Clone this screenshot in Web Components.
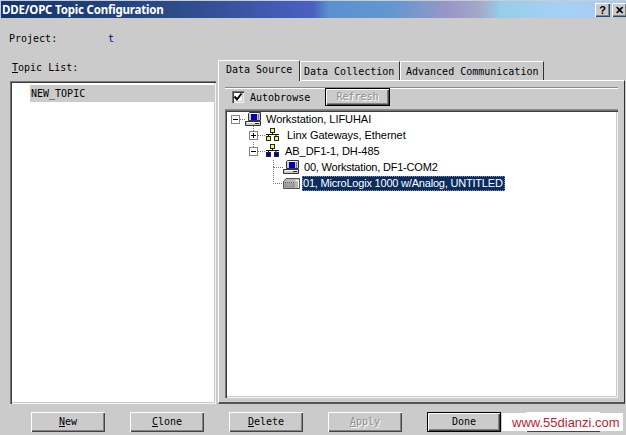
<!DOCTYPE html>
<html>
<head>
<meta charset="utf-8">
<title>DDE/OPC Topic Configuration</title>
<style>
    html, body { margin: 0; padding: 0; background: #cbcbcb; }
</style>
</head>
<body>
<dde-dialog>
    <win-titlebar slot="title">DDE/OPC Topic Configuration</win-titlebar>
    <project-row slot="project"></project-row>
    <topic-list slot="left"></topic-list>
    <tab-panel slot="right">
        <browse-bar></browse-bar>
        <source-tree></source-tree>
    </tab-panel>
    <win-button slot="buttons" key="N" rest="ew"></win-button>
    <win-button slot="buttons" key="C" rest="lone"></win-button>
    <win-button slot="buttons" key="D" rest="elete"></win-button>
    <win-button slot="buttons" key="A" rest="pply" disabled></win-button>
    <win-button slot="buttons" rest="Done" default></win-button>
    <win-button slot="buttons"></win-button>
    <site-mark slot="mark">www.55dianzi.com</site-mark>
</dde-dialog>

<script>
const MONO = `"DejaVu Sans Mono", "Liberation Mono", monospace`;
const SANS = `"Noto Sans", "DejaVu Sans", sans-serif`;

// classic raised / sunken edges
const RAISED = 'box-shadow: inset 1px 1px 0 #fff, inset -1px -1px 0 #444, inset -2px -2px 0 #848484;';
const SUNKEN = 'box-shadow: inset 1px 1px 0 #777, inset 2px 2px 0 #3c3c3c, inset -1px -1px 0 #f4f4f4, inset -2px -2px 0 #cbcbcb;';

class ShadowBase extends HTMLElement {
    constructor() {
        super();
        this.attachShadow({mode: "open"});
        this.shadowRoot.innerHTML = this.markup();
    }
    markup() { return ''; }
}

class DdeDialog extends ShadowBase {
    markup() { return `
    <style>
        :host {
            display: flex; flex-direction: column; position: relative;
            width: 626px; height: 435px; overflow: hidden;
            background: #cbcbcb; font: 10px ${MONO}; color: #000;
        }
        .main { display: flex; height: 345px; gap: 2px; padding-left: 10px; }
        .main ::slotted(topic-list) { flex: none; }
        .main ::slotted(tab-panel) { flex: none; }
        .buttons { display: flex; gap: 25px; padding: 8px 0 0 31px; }
    </style>
    <slot name="title"></slot>
    <slot name="project"></slot>
    <div class="main"><slot name="left"></slot><slot name="right"></slot></div>
    <div class="buttons"><slot name="buttons"></slot></div>
    <slot name="mark"></slot>`; }
}

class WinTitlebar extends ShadowBase {
    markup() { return `
    <style>
        :host {
            display: flex; align-items: center; justify-content: space-between;
            height: 17px; margin: 1px 0 0 1px; padding-left: 1px;
            background: linear-gradient(90deg, #12346c 0, #2c4a86 170px, #4a60c2 312px, #5a90d0 328px,
                #6298d0 392px, #9a96c8 448px, #a2a8c8 478px, #98cde8 500px, #a6d0f6 560px, #a6ccf2 625px);
            color: #fff; font: bold 11.5px ${SANS}; letter-spacing: -0.2px; white-space: nowrap;
        }
        .caps { display: flex; gap: 2px; margin-right: -1px; }
        .cap {
            width: 15px; height: 14px; background: #cbcbcb; color: #000; ${RAISED}
            font: bold 11px/14px "Liberation Sans", sans-serif; text-align: center; letter-spacing: 0;
        }
    </style>
    <span><slot></slot></span>
    <div class="caps"><div class="cap">?</div><div class="cap">✕</div></div>`; }
}

class ProjectRow extends ShadowBase {
    markup() { return `
    <style>
        :host { display: flex; height: 41px; padding: 15px 0 0 9px; box-sizing: border-box; }
        span { width: 99px; }
        b { font-weight: normal; color: #00008c; }
    </style>
    <span>Project:</span><b>t</b>`; }
}

class TopicList extends ShadowBase {
    markup() { return `
    <style>
        :host { display: flex; flex-direction: column; width: 206px; }
        label { height: 22px; padding: 3px 0 0 2px; box-sizing: border-box; }
        u { text-decoration: underline; }
        .box {
            flex: 1; background: #fff; ${SUNKEN}
            padding: 4px 2px 0 20px; box-sizing: border-box;
        }
        .row { background: #cbcbcb; height: 17px; line-height: 17px; padding-left: 1px; }
    </style>
    <label><u>T</u>opic List:</label>
    <div class="box"><div class="row">NEW_TOPIC</div></div>`; }
}

class TabPanel extends ShadowBase {
    markup() { return `
    <style>
        :host { display: flex; flex-direction: column; width: 407px; }
        .tabs { display: flex; height: 21px; align-items: flex-end; position: relative; z-index: 1; white-space: nowrap; }
        .tab {
            height: 19px; padding: 3px 0 0 5px; box-sizing: border-box; line-height: 14px;
            border-top: 1px solid #fff; border-left: 1px solid #fff; border-right: 1px solid #333;
        }
        .tab.on { height: 21px; width: 82px; padding: 2px 0 0 7px; margin-bottom: -1px; background: #cbcbcb; border-radius: 1px 1px 0 0; }
        .tab.b { width: 100px; padding-left: 3px; }
        .tab.c { width: 144px; }
        .body {
            flex: 1; border-top: 1px solid #fff; border-left: 1px solid #fff;
            border-right: 1px solid #333; border-bottom: 2px solid #555;
            padding: 6px 6px 4px 6px; box-sizing: border-box; display: flex; flex-direction: column;
        }
    </style>
    <div class="tabs">
        <div class="tab on">Data Source</div>
        <div class="tab b">Data Collection</div>
        <div class="tab c">Advanced Communication</div>
    </div>
    <div class="body"><slot></slot></div>`; }
}

class BrowseBar extends ShadowBase {
    markup() { return `
    <style>
        :host {
            display: flex; align-items: center; height: 18px;
            border-top: 1px solid #8a8a8a; border-bottom: 1px solid #8a8a8a;
            box-shadow: inset 0 1px 0 #fff;
            padding: 0 0 3px 7px; box-sizing: content-box;
        }
        .check {
            width: 12px; height: 12px; background: #fff; ${SUNKEN}
            display: flex; align-items: center; justify-content: center; margin-right: 6px;
        }
        .refresh {
            margin-left: 15px; width: 65px; height: 18px; ${RAISED}
            border: 1px solid #000; box-sizing: border-box; text-align: center; line-height: 15px;
            color: #909090; text-shadow: 1px 1px 0 #fff;
        }
        span { width: 60px; }
    </style>
    <div class="check"><svg width="10" height="10" viewBox="0 0 10 10"><path d="M1.5 4.5 L4 7.5 L8.5 1.5" fill="none" stroke="#000" stroke-width="2"/></svg></div>
    <span>Autobrowse</span>
    <div class="refresh">Refresh</div>`; }
}

const ICONS = {
    computer: `<svg width="17" height="16" viewBox="0 0 17 16">
        <path d="M3.5 2.5 L4.5 1.5 H15.5 V9.5 H3.5 Z" fill="#cbcbcb" stroke="#333"/>
        <path d="M4.5 2.5 H14" stroke="#fff"/>
        <rect x="6" y="3" width="6" height="6" fill="#0000b0"/>
        <path d="M13.5 3 V9" stroke="#777"/>
        <path d="M0.5 10.5 H15.5 V14.5 H0.5 Z" fill="#cbcbcb" stroke="#333"/>
        <path d="M2 11.5 H14" stroke="#fff"/>
        <path d="M10 12.5 H14" stroke="#222"/>
    </svg>`,
    plc: `<svg width="17" height="16" viewBox="0 0 17 16">
        <path d="M0.5 6.5 L3 3.5 H16.5 V13.5 H0.5 Z" fill="#b8b8b8" stroke="#555"/>
        <path d="M2 7.5 H11 V12 H2 Z" fill="#a4a4a4" stroke="#666" stroke-dasharray="1 1"/>
        <path d="M12.5 5.5 H15.5 V12.5" fill="none" stroke="#fff"/>
    </svg>`,
    netYellow: netIcon('#ffff00'),
    netBlue: netIcon('#0000b0')
};

function netIcon(fill) {
    return `<svg width="15" height="16" viewBox="0 0 15 16">
        <rect x="5.5" y="1.5" width="4" height="4" fill="#ffff00" stroke="#222"/>
        <path d="M7.5 5 V7 M1 7.5 H14 M3.5 7.5 V9 M11 7.5 V9" stroke="#111" fill="none"/>
        <rect x="1.5" y="9.5" width="4" height="4" fill="${fill}" stroke="#222"/>
        <rect x="9.5" y="9.5" width="4" height="4" fill="${fill}" stroke="#222"/>
    </svg>`;
}

/* prefix = expander and dotted connector cell in front of each tree node */
function expander(x, sign) {
    let bars = `<path d="M${x-2} 8.5 H${x+3}" stroke="#000"/>`;
    if(sign === 'plus') {
        bars += `<path d="M${x+.5} 6 V11" stroke="#000"/>`;
    }
    return `<rect x="${x-3.5}" y="4.5" width="8" height="8" fill="#fff" stroke="#848484"/>${bars}`;
}

class TreeNode extends ShadowBase {
    markup() {
        const level = +this.getAttribute('level');
        const sign = this.getAttribute('sign');
        const width = [20, 40, 58][level];
        let lines = '';
        const dot = 'stroke="#777" stroke-dasharray="1 1" fill="none"';
        if(level === 0) {
            lines = `<path d="M15 8.5 H20" ${dot}/>` + expander(10, sign);
        }
        if(level === 1) {
            lines = `<path d="M28.5 -1 V4 M33 8.5 H40" ${dot}/>` + expander(28, sign);
        }
        if(level === 2) {
            lines = `<path d="M48.5 ${this.hasAttribute('first') ? '1' : '-8'} V8.5 H58" ${dot}/>`;
        }
        return `
    <style>
        :host { display: flex; align-items: center; height: 16px; white-space: nowrap; }
        svg { display: block; flex: none; }
        .label {
            padding: 0 1px; margin-left: ${this.getAttribute('gap') || 0}px; height: 14px; line-height: 12px;
            box-sizing: border-box; border: 1px solid transparent;
            letter-spacing: ${level === 2 ? '-0.2px' : '-0.05px'};
        }
        :host([selected]) .label { background: #0c2c60; color: #fff; border: 1px dotted #7f8fa8; padding: 0; width: 203px; height: 15px; line-height: 13px; }
    </style>
    <svg width="${width}" height="16" viewBox="0 0 ${width} 16" style="overflow:visible">${lines}</svg>
    ${ICONS[this.getAttribute('icon')]}
    <span class="label"><slot></slot></span>`;
    }
}

class SourceTree extends ShadowBase {
    markup() { return `
    <style>
        :host {
            flex: 1; display: block; background: #fff; ${SUNKEN}
            font: 11px "Liberation Sans", sans-serif; color: #000; padding-top: 1px;
        }
    </style>
    <div>
        <tree-node level="0" sign="minus" icon="computer" gap="2">Workstation, LIFUHAI</tree-node>
        <tree-node level="1" sign="plus" icon="netYellow" gap="5">Linx Gateways, Ethernet</tree-node>
        <tree-node level="1" sign="minus" icon="netBlue" gap="3">AB_DF1-1, DH-485</tree-node>
        <tree-node level="2" first icon="computer" gap="2">00, Workstation, DF1-COM2</tree-node>
        <tree-node level="2" icon="plc" gap="2" selected>01, MicroLogix 1000 w/Analog, UNTITLED</tree-node>
    </div>`; }
}

class WinButton extends ShadowBase {
    markup() {
        const key = this.getAttribute('key') || '';
        const rest = this.getAttribute('rest') || '';
        return `
    <style>
        :host {
            display: block; width: 74px; height: 20px; box-sizing: border-box; flex: none;
            ${RAISED} text-align: center; line-height: 19px; background: #cbcbcb;
        }
        :host([default]) { border: 1px solid #000; line-height: 17px; }
        :host([disabled]) { color: #909090; text-shadow: 1px 1px 0 #fff; }
    </style>
    <u>${key}</u>${rest}`;
    }
}

class SiteMark extends ShadowBase {
    markup() { return `
    <style>
        :host {
            position: absolute; left: 502px; top: 413px; width: 121px; height: 18px;
            padding-left: 10px; box-sizing: border-box;
            background: #fff; color: #c01c34; font: 13px/19px "Liberation Sans", sans-serif;
            white-space: nowrap;
        }
    </style>
    <slot></slot>`; }
}

customElements.define("tree-node", TreeNode);
customElements.define("dde-dialog", DdeDialog);
customElements.define("win-titlebar", WinTitlebar);
customElements.define("project-row", ProjectRow);
customElements.define("topic-list", TopicList);
customElements.define("tab-panel", TabPanel);
customElements.define("browse-bar", BrowseBar);
customElements.define("source-tree", SourceTree);
customElements.define("win-button", WinButton);
customElements.define("site-mark", SiteMark);
</script>
</body>
</html>
